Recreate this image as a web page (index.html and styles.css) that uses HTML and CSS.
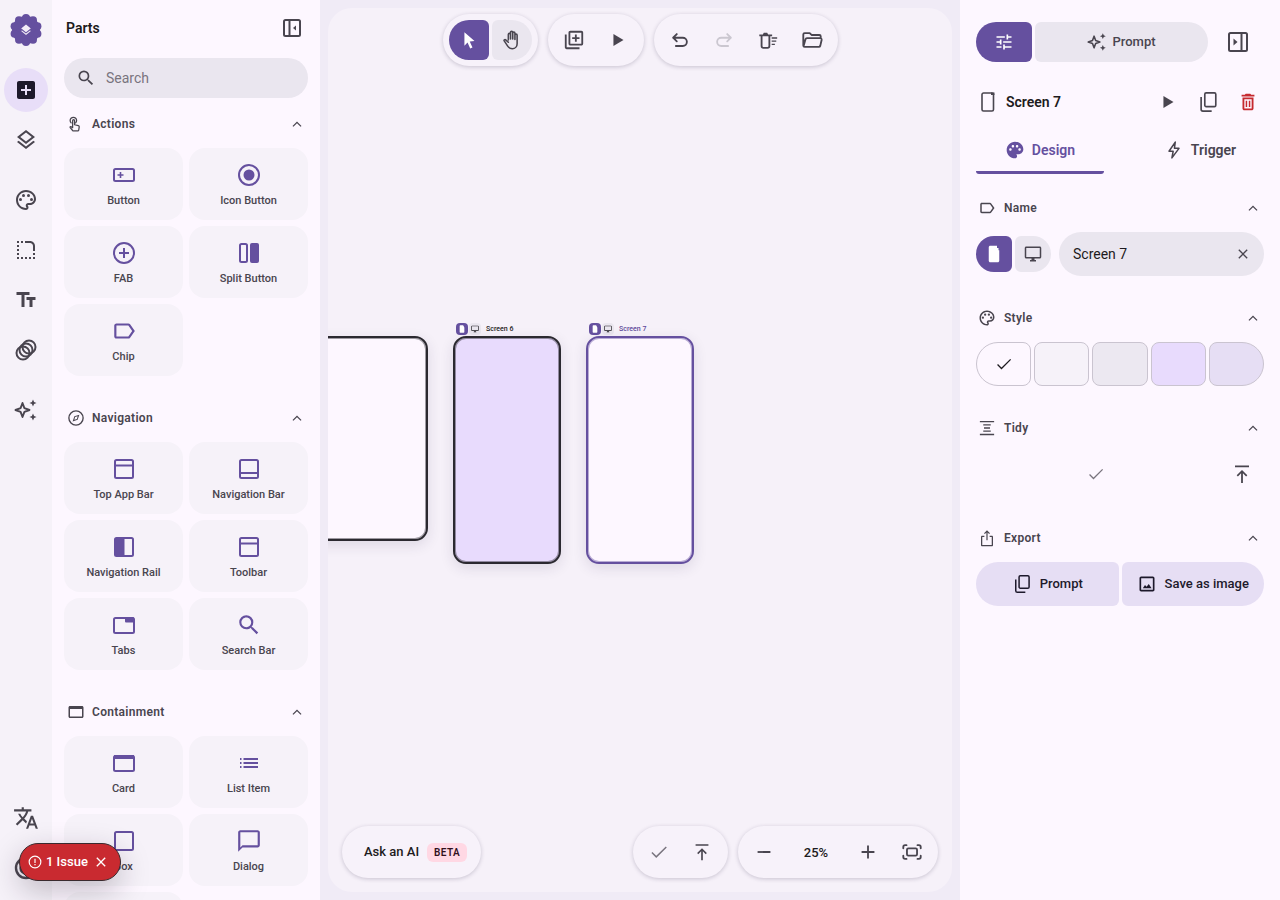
FILE: index.html
```html
<!DOCTYPE html>
<html lang="en">
<head>
    <meta charset="UTF-8">
    <title>Parts</title>
    <link rel="stylesheet" href="styles.css">
</head>
<body>
    <!-- icon sprite -->
    <svg class="sprite" xmlns="http://www.w3.org/2000/svg">
        <symbol id="i-search" viewBox="0 0 24 24"><path d="M15.5 14h-.79l-.28-.27A6.471 6.471 0 0 0 16 9.5 6.5 6.5 0 1 0 9.5 16c1.61 0 3.09-.59 4.23-1.57l.27.28v.79l5 4.99L20.49 19l-4.99-5zm-6 0C7.01 14 5 11.99 5 9.5S7.01 5 9.5 5 14 7.01 14 9.5 11.99 14 9.5 14z"/></symbol>
        <symbol id="i-less" viewBox="0 0 24 24"><path d="M12 8.500l-6 6 1.200 1.200 4.800-4.800 4.800 4.800 1.200-1.200z"/></symbol>
        <symbol id="i-addbox" viewBox="0 0 24 24"><path d="M19 3H5c-1.100 0-2 .9-2 2v14c0 1.100.9 2 2 2h14c1.100 0 2-.9 2-2V5c0-1.100-.9-2-2-2zm-2 10h-4v4h-2v-4H7v-2h4V7h2v4h4v2z"/></symbol>
        <symbol id="i-layers" viewBox="0 0 24 24"><path d="M11.99 18.54l-7.37-5.73L3 14.07l9 7 9-7-1.63-1.27zM12 16l7.36-5.73L21 9l-9-7-9 7 1.63 1.27L12 16zm0-11.47L17.74 9 12 13.47 6.26 9 12 4.53z"/></symbol>
        <symbol id="i-layers-fill" viewBox="0 0 24 24"><path d="M11.99 18.54l-7.37-5.73L3 14.07l9 7 9-7-1.63-1.27zM12 16l7.36-5.73L21 9l-9-7-9 7 1.63 1.27L12 16z"/></symbol>
        <symbol id="i-palette" viewBox="0 0 24 24"><path d="M12 22C6.49 22 2 17.51 2 12S6.49 2 12 2s10 4.04 10 9c0 3.31-2.69 6-6 6h-1.77c-.28 0-.5.22-.5.5 0 .12.05.23.13.33.41.47.64 1.06.64 1.67 0 1.38-1.12 2.5-2.5 2.5zm0-18c-4.41 0-8 3.59-8 8s3.59 8 8 8c.28 0 .5-.22.5-.5 0-.16-.08-.28-.14-.35-.41-.46-.63-1.05-.63-1.65 0-1.38 1.12-2.5 2.5-2.5H16c2.21 0 4-1.79 4-4 0-3.86-3.59-7-8-7z"/><circle cx="6.5" cy="11.5" r="1.5"/><circle cx="9.5" cy="7.5" r="1.5"/><circle cx="14.5" cy="7.5" r="1.5"/><circle cx="17.5" cy="11.5" r="1.5"/></symbol>
        <symbol id="i-palette-fill" viewBox="0 0 24 24"><path d="M12 2C6.49 2 2 6.49 2 12s4.49 10 10 10c1.38 0 2.5-1.12 2.5-2.5 0-.61-.23-1.2-.64-1.67-.08-.1-.13-.21-.13-.33 0-.28.22-.5.5-.5H16c3.31 0 6-2.69 6-6 0-4.96-4.49-9-10-9zm5.5 11c-.83 0-1.5-.67-1.5-1.5s.67-1.5 1.5-1.5 1.5.67 1.5 1.5-.67 1.5-1.5 1.5zm-3-4c-.83 0-1.5-.67-1.5-1.5S13.67 6 14.5 6s1.5.67 1.5 1.5S15.33 9 14.5 9zM5 11.5c0-.83.67-1.5 1.5-1.5s1.5.67 1.5 1.5S7.33 13 6.5 13 5 12.33 5 11.5zm6-4c0 .83-.67 1.5-1.5 1.5S8 8.33 8 7.5 8.67 6 9.5 6s1.5.67 1.5 1.5z"/></symbol>
        <symbol id="i-corner" viewBox="0 0 24 24"><path d="M19 19h2v2h-2v-2zm0-2h2v-2h-2v2zM3 13h2v-2H3v2zm0 4h2v-2H3v2zm0-8h2V7H3v2zm0-4h2V3H3v2zm4 0h2V3H7v2zm8 16h2v-2h-2v2zm-4 0h2v-2h-2v2zm-4 0h2v-2H7v2zm-4 0h2v-2H3v2zM21 8c0-2.76-2.24-5-5-5h-5v2h5c1.65 0 3 1.35 3 3v5h2V8z"/></symbol>
        <symbol id="i-text" viewBox="0 0 24 24"><path d="M2.5 4v3h5v12h3V7h5V4h-13zm19 5h-9v3h3v7h3v-7h3V9z"/></symbol>
        <symbol id="i-rings" viewBox="0 0 24 24"><g fill="none" stroke="currentColor" stroke-width="2"><circle cx="9" cy="15" r="6.5"/><circle cx="12" cy="12" r="6.5"/><circle cx="15" cy="9" r="6.5"/></g></symbol>
        <symbol id="i-spark" viewBox="0 0 24 24"><path d="M8.500 5l1.900 5.100 5.100 1.900-5.100 1.900L8.500 19l-1.900-5.100L1.500 12l5.100-1.900z" fill="none" stroke="currentColor" stroke-width="1.900" stroke-linejoin="round"/><path d="M19 1.500l1.100 2.400 2.400 1.100-2.400 1.100L19 8.500l-1.100-2.400L15.500 5l2.400-1.100zM19 15.500l1.100 2.400 2.400 1.100-2.400 1.100-1.100 2.400-1.100-2.400-2.400-1.100 2.400-1.100z"/></symbol>
        <symbol id="i-translate" viewBox="0 0 24 24"><path d="M12.870 15.070l-2.540-2.510.03-.03c1.740-1.940 2.980-4.170 3.710-6.530H17V4h-7V2H8v2H1v1.990h11.170C11.500 7.920 10.440 9.750 9 11.350 8.070 10.320 7.300 9.190 6.690 8h-2c.73 1.630 1.730 3.170 2.980 4.560l-5.090 5.020L4 19l5-5 3.110 3.110.76-2.040zM18.500 10h-2L12 22h2l1.120-3h4.750L21 22h2l-4.500-12zm-2.620 7l1.620-4.330L19.120 17h-3.240z"/></symbol>
        <symbol id="i-arcs" viewBox="0 0 24 24"><g fill="none" stroke="currentColor" stroke-width="2.400"><circle cx="12" cy="12" r="10"/><circle cx="12" cy="12" r="5.500"/></g></symbol>
        <symbol id="i-panel-left" viewBox="0 0 24 24"><g fill="none" stroke="currentColor" stroke-width="2"><rect x="4" y="4" width="16" height="16" rx="1.500"/><path d="M9.500 4v16"/></g><path d="M16 9.500v5L13 12z"/></symbol>
        <symbol id="i-panel-right" viewBox="0 0 24 24"><g fill="none" stroke="currentColor" stroke-width="2"><rect x="3" y="3" width="18" height="18" rx="1.500"/><path d="M15.500 3v18"/></g><path d="M7.500 8.500v7l4-3.500z"/></symbol>
        <symbol id="i-touch" viewBox="0 0 24 24"><g fill="none" stroke="currentColor" stroke-width="1.700" stroke-linejoin="round" stroke-linecap="round"><path d="M5.500 10.500a4.300 4.300 0 1 1 6 0"/><path d="M7 20l-2.700-3.200c-.6-.8.400-1.800 1.300-1.200l1.900 1.300V7.500a1.300 1.300 0 0 1 2.600 0V13l5 1.100c.8.200 1.300.9 1.200 1.700l-.7 4.500c-.1.600-.6 1-1.200 1H8.100c-.5 0-.8-.5-1.100-1.300z"/></g></symbol>
        <symbol id="i-compass" viewBox="0 0 24 24"><circle cx="12" cy="12" r="9.500" fill="none" stroke="currentColor" stroke-width="1.800"/><path d="M7.500 16.500l2.300-6.700 6.700-2.300-2.300 6.700zM10.800 10.800l-1 3.400 3.400-1 1-3.400z" fill-rule="evenodd"/></symbol>
        <symbol id="i-window" viewBox="0 0 24 24"><path d="M20 4H4c-1.100 0-2 .9-2 2v12c0 1.100.9 2 2 2h16c1.100 0 2-.9 2-2V6c0-1.100-.9-2-2-2zm0 14H4V8h16v10z"/></symbol>
        <symbol id="i-button" viewBox="0 0 24 24"><rect x="2" y="6" width="20" height="12" rx="1.500" fill="none" stroke="currentColor" stroke-width="2"/><path d="M5.500 11.200h2.200V9h1.600v2.200h2.200v1.600H9.300V15H7.700v-2.200H5.500z"/></symbol>
        <symbol id="i-radio" viewBox="0 0 24 24"><circle cx="12" cy="12" r="10" fill="none" stroke="currentColor" stroke-width="2"/><circle cx="12" cy="12" r="5.500"/></symbol>
        <symbol id="i-fab" viewBox="0 0 24 24"><circle cx="12" cy="12" r="10" fill="none" stroke="currentColor" stroke-width="2"/><path d="M7 11h4V7h2v4h4v2h-4v4h-2v-4H7z"/></symbol>
        <symbol id="i-split" viewBox="0 0 24 24"><rect x="3" y="3" width="7" height="18" rx="1.500" fill="none" stroke="currentColor" stroke-width="2"/><rect x="13" y="2" width="9" height="20" rx="2"/></symbol>
        <symbol id="i-chip" viewBox="0 0 24 24"><path d="M17.630 5.840C17.270 5.330 16.670 5 16 5L5 5.010C3.900 5.010 3 5.900 3 7v10c0 1.100.9 1.990 2 1.990L16 19c.67 0 1.270-.33 1.630-.84L22 12l-4.370-6.160zM16 17H5V7h11l3.550 5L16 17z"/></symbol>
        <symbol id="i-topbar" viewBox="0 0 24 24"><g fill="none" stroke="currentColor" stroke-width="2"><rect x="3" y="3" width="18" height="18" rx="1.500"/><path d="M3 8.500h18"/></g></symbol>
        <symbol id="i-navbar" viewBox="0 0 24 24"><g fill="none" stroke="currentColor" stroke-width="2"><rect x="3" y="3" width="18" height="18" rx="1.500"/><path d="M3 16h18"/></g></symbol>
        <symbol id="i-rail" viewBox="0 0 24 24"><rect x="3" y="3" width="18" height="18" rx="1.500" fill="none" stroke="currentColor" stroke-width="2"/><rect x="3" y="3" width="9.500" height="18" rx="1.500"/></symbol>
        <symbol id="i-tabs" viewBox="0 0 24 24"><rect x="2" y="5" width="20" height="15" rx="1.500" fill="none" stroke="currentColor" stroke-width="2"/><rect x="13" y="4" width="9" height="5.500" rx="1"/></symbol>
        <symbol id="i-card" viewBox="0 0 24 24"><rect x="2" y="5" width="20" height="15" rx="1.500" fill="none" stroke="currentColor" stroke-width="2"/><rect x="2" y="4" width="20" height="4"/></symbol>
        <symbol id="i-list" viewBox="0 0 24 24"><path d="M3 13h1.500v-2H3v2zm0 4h1.500v-2H3v2zm0-8h1.500V7H3v2zm3.500 4H21v-2H6.500v2zm0 4H21v-2H6.500v2zm0-10v2H21V7H6.500z"/></symbol>
        <symbol id="i-box" viewBox="0 0 24 24"><rect x="3" y="3" width="18" height="18" rx="1.500" fill="none" stroke="currentColor" stroke-width="2"/></symbol>
        <symbol id="i-dialog" viewBox="0 0 24 24"><path d="M20 2H4c-1.100 0-2 .9-2 2v18l4-4h14c1.100 0 2-.9 2-2V4c0-1.100-.9-2-2-2zm0 14H6l-2 2V4h16v12z"/></symbol>
        <symbol id="i-cursor" viewBox="0 0 24 24"><path d="M7 3.500l11 9.700-5.200.4 3 6.500-2.500 1.100-2.900-6.600L7 18.300z"/></symbol>
        <symbol id="i-hand" viewBox="0 0 24 24"><path d="M8 12V6a1.200 1.200 0 0 1 2.400 0v5M10.400 11V3.700a1.200 1.200 0 0 1 2.400 0V11M12.800 11V4.500a1.200 1.200 0 0 1 2.400 0v7M15.200 11.500V6.700a1.200 1.200 0 0 1 2.400 0V16c0 3.300-2.300 5.500-5.300 5.500-2.400 0-3.800-1-5-2.800L3.500 13c-.6-1 .7-2 1.600-1.200L8 14.500" fill="none" stroke="currentColor" stroke-width="1.700" stroke-linecap="round" stroke-linejoin="round"/></symbol>
        <symbol id="i-libadd" viewBox="0 0 24 24"><path d="M4 6H2v14c0 1.100.9 2 2 2h14v-2H4V6zm16-4H8c-1.100 0-2 .9-2 2v12c0 1.100.9 2 2 2h12c1.100 0 2-.9 2-2V4c0-1.100-.9-2-2-2zm0 14H8V4h12v12zm-7-2h2v-3h3V9h-3V6h-2v3h-3v2h3z"/></symbol>
        <symbol id="i-play" viewBox="0 0 24 24"><path d="M7 5.500v13l11-6.500z"/></symbol>
        <symbol id="i-undo" viewBox="0 0 24 24"><path d="M8.500 5.500L4.500 9.500l4 4M4.500 9.500H15a4.500 4.500 0 0 1 0 9H7.500" fill="none" stroke="currentColor" stroke-width="2" stroke-linecap="round" stroke-linejoin="round"/></symbol>
        <symbol id="i-redo" viewBox="0 0 24 24"><path d="M15.500 5.500l4 4-4 4M19.500 9.500H9a4.500 4.500 0 0 0 0 9h7.500" fill="none" stroke="currentColor" stroke-width="2" stroke-linecap="round" stroke-linejoin="round"/></symbol>
        <symbol id="i-sweep" viewBox="0 0 24 24"><path d="M5 8v10.500c0 1.100.9 2 2 2h4.500c1.100 0 2-.9 2-2V8M2.500 7h14M7 7l1-2h2.500l1 2" fill="none" stroke="currentColor" stroke-width="2"/><path d="M16 9h6v1.500h-6zM16 12.500h5v1.500h-5zM16 16h3.500v1.500H16z"/></symbol>
        <symbol id="i-folder" viewBox="0 0 24 24"><path d="M4 19.500c-1 0-1.500-.7-1.500-1.500V6c0-.9.600-1.500 1.500-1.500h5.500l2 2H20c.9 0 1.500.6 1.500 1.500V10M4 19.500h15.500c.8 0 1.300-.5 1.500-1.100L22.500 12c.2-1.100-.4-2-1.500-2H6.500c-.8 0-1.400.5-1.600 1.200L3 18" fill="none" stroke="currentColor" stroke-width="2" stroke-linejoin="round"/></symbol>
        <symbol id="i-check" viewBox="0 0 24 24"><path d="M9 16.200L4.800 12l-1.100 1.100L9 18.500 20.500 7l-1.100-1.100z"/></symbol>
        <symbol id="i-top" viewBox="0 0 24 24"><path d="M5 3.500h14v1.800H5zM11.100 21v-9.800l-3.200 3.200L6.700 13.200 12 8l5.300 5.200-1.200 1.200-3.200-3.200V21z"/></symbol>
        <symbol id="i-minus" viewBox="0 0 24 24"><path d="M5 11h14v2H5z"/></symbol>
        <symbol id="i-plus" viewBox="0 0 24 24"><path d="M19 13h-6v6h-2v-6H5v-2h6V5h2v6h6v2z"/></symbol>
        <symbol id="i-fit" viewBox="0 0 24 24"><g fill="none" stroke="currentColor" stroke-width="2" stroke-linecap="round"><path d="M2.500 8V6.500c0-1.100.9-2 2-2H6M18 4.500h1.500c1.100 0 2 .9 2 2V8M21.500 16v1.500c0 1.100-.9 2-2 2H18M6 19.500H4.500c-1.100 0-2-.9-2-2V16"/><rect x="6.500" y="8" width="11" height="8" rx="1.500"/></g></symbol>
        <symbol id="i-close" viewBox="0 0 24 24"><path d="M19 6.400L17.600 5 12 10.600 6.400 5 5 6.400 10.600 12 5 17.600 6.400 19 12 13.400 17.600 19 19 17.600 13.400 12z"/></symbol>
        <symbol id="i-error" viewBox="0 0 24 24"><circle cx="12" cy="12" r="10" fill="none" stroke="currentColor" stroke-width="2"/><path d="M11 6.500h2v7h-2zM11 15.500h2v2h-2z"/></symbol>
        <symbol id="i-tune" viewBox="0 0 24 24"><path d="M3 17v2h6v-2H3zM3 5v2h10V5H3zm10 16v-2h8v-2h-8v-2h-2v6h2zM7 9v2H3v2h4v2h2V9H7zm14 4v-2H11v2h10zm-6-4h2V7h4V5h-4V3h-2v6z"/></symbol>
        <symbol id="i-phone" viewBox="0 0 24 24"><path d="M7.500 3h8.500c.8 0 1.500.7 1.500 1.500v15c0 .8-.7 1.500-1.500 1.500H7.500c-.8 0-1.500-.7-1.500-1.500v-15C6 3.700 6.700 3 7.500 3z" fill="none" stroke="currentColor" stroke-width="1.600"/><path d="M15 2.500h3.500v2.500H15z"/></symbol>
        <symbol id="i-phone-fill" viewBox="0 0 24 24"><path d="M7 1h9v3h2v3h-1v0h2v14c0 1.100-.9 2-2 2H7c-1.100 0-2-.9-2-2V3c0-1.100.9-2 2-2z"/></symbol>
        <symbol id="i-copy" viewBox="0 0 24 24"><g fill="none" stroke="currentColor" stroke-width="1.800" stroke-linejoin="round"><rect x="8.500" y="2" width="12" height="15" rx="1.500"/><path d="M4.500 6.500V20c0 1.100.9 2 2 2H16"/></g></symbol>
        <symbol id="i-delete" viewBox="0 0 24 24"><path d="M6 19c0 1.100.9 2 2 2h8c1.100 0 2-.9 2-2V7H6v12zM8 9h8v10H8V9zm7.500-5l-1-1h-5l-1 1H5v2h14V4h-3.500zM9.500 10.500h1.600v7H9.500zM12.900 10.500h1.600v7h-1.600z"/></symbol>
        <symbol id="i-bolt" viewBox="0 0 24 24"><path d="M13.500 2.500L6 13.500h5L9.500 21.500 18 10h-5.500z" fill="none" stroke="currentColor" stroke-width="1.800" stroke-linejoin="round"/></symbol>
        <symbol id="i-desktop" viewBox="0 0 24 24"><path d="M21 2H3c-1.100 0-2 .9-2 2v12c0 1.100.9 2 2 2h7v2H8v2h8v-2h-2v-2h7c1.100 0 2-.9 2-2V4c0-1.100-.9-2-2-2zm0 14H3V4h18v12z"/></symbol>
        <symbol id="i-tidy" viewBox="0 0 24 24"><path d="M2.500 2.500h19v1.800h-19zM2.500 19.700h19v1.800h-19zM7 7h10v1.800H7zM8 11.100h8v1.800H8zM7 15.200h10V17H7z"/></symbol>
        <symbol id="i-share" viewBox="0 0 24 24"><path d="M16 5.500l-1.200 1.200-2-2V15h-1.600V4.700l-2 2L8 5.500l4-4zM8.500 9v1.700H5.700v10.600h12.600V10.700h-2.800V9h3c.9 0 1.500.7 1.500 1.500v11c0 .8-.6 1.500-1.500 1.500h-13C4.700 23 4 22.300 4 21.500v-11C4 9.700 4.700 9 5.500 9z"/></symbol>
        <symbol id="i-image" viewBox="0 0 24 24"><path d="M19 5v14H5V5h14m0-2H5c-1.100 0-2 .9-2 2v14c0 1.100.9 2 2 2h14c1.100 0 2-.9 2-2V5c0-1.100-.9-2-2-2zm-4.900 8.900l-2.600 3.400-1.900-2.200L7 17h10.500z"/></symbol>
    </svg>

    <div class="app">
        <nav class="rail">
            <svg class="logo" viewBox="0 0 32 32">
                <g class="logo-shape">
                    <circle cx="16" cy="16" r="14"/>
                    <circle cx="16" cy="4" r="4"/><circle cx="23" cy="6.300" r="4"/><circle cx="27.400" cy="12.300" r="4"/><circle cx="27.400" cy="19.700" r="4"/><circle cx="23" cy="25.700" r="4"/>
                    <circle cx="16" cy="28" r="4"/><circle cx="9" cy="25.700" r="4"/><circle cx="4.600" cy="19.700" r="4"/><circle cx="4.600" cy="12.300" r="4"/><circle cx="9" cy="6.300" r="4"/>
                </g>
                <use href="#i-layers-fill" x="9.500" y="9.500" width="13" height="13" class="logo-mark"/>
            </svg>
            <button class="rail-btn rail-active"><svg class="ic"><use href="#i-addbox"/></svg></button>
            <button class="rail-btn"><svg class="ic"><use href="#i-layers"/></svg></button>
            <button class="rail-btn rail-gap"><svg class="ic"><use href="#i-palette"/></svg></button>
            <button class="rail-btn"><svg class="ic"><use href="#i-corner"/></svg></button>
            <button class="rail-btn"><svg class="ic"><use href="#i-text"/></svg></button>
            <button class="rail-btn"><svg class="ic"><use href="#i-rings"/></svg></button>
            <button class="rail-btn rail-gap"><svg class="ic"><use href="#i-spark"/></svg></button>
            <button class="rail-btn rail-bottom"><svg class="ic ic-26"><use href="#i-translate"/></svg></button>
            <button class="rail-btn"><svg class="ic"><use href="#i-arcs"/></svg></button>
        </nav>

        <aside class="parts">
            <div class="parts-head">
                <h2>Parts</h2>
                <svg class="ic"><use href="#i-panel-left"/></svg>
            </div>
            <div class="search">
                <svg class="ic ic-20"><use href="#i-search"/></svg>
                <span>Search</span>
            </div>

            <section class="group">
                <div class="sec-head">
                    <svg class="ic ic-18"><use href="#i-touch"/></svg>
                    <span>Actions</span>
                    <svg class="ic ic-18 sec-arrow"><use href="#i-less"/></svg>
                </div>
                <div class="cards">
                    <div class="card"><svg class="ic"><use href="#i-button"/></svg><span>Button</span></div>
                    <div class="card"><svg class="ic"><use href="#i-radio"/></svg><span>Icon Button</span></div>
                    <div class="card"><svg class="ic"><use href="#i-fab"/></svg><span>FAB</span></div>
                    <div class="card"><svg class="ic"><use href="#i-split"/></svg><span>Split Button</span></div>
                    <div class="card"><svg class="ic ic-26"><use href="#i-chip"/></svg><span>Chip</span></div>
                </div>
            </section>

            <section class="group">
                <div class="sec-head">
                    <svg class="ic ic-18"><use href="#i-compass"/></svg>
                    <span>Navigation</span>
                    <svg class="ic ic-18 sec-arrow"><use href="#i-less"/></svg>
                </div>
                <div class="cards">
                    <div class="card"><svg class="ic"><use href="#i-topbar"/></svg><span>Top App Bar</span></div>
                    <div class="card"><svg class="ic"><use href="#i-navbar"/></svg><span>Navigation Bar</span></div>
                    <div class="card"><svg class="ic"><use href="#i-rail"/></svg><span>Navigation Rail</span></div>
                    <div class="card"><svg class="ic"><use href="#i-topbar"/></svg><span>Toolbar</span></div>
                    <div class="card"><svg class="ic"><use href="#i-tabs"/></svg><span>Tabs</span></div>
                    <div class="card"><svg class="ic ic-26"><use href="#i-search"/></svg><span>Search Bar</span></div>
                </div>
            </section>

            <section class="group">
                <div class="sec-head">
                    <svg class="ic ic-18"><use href="#i-window"/></svg>
                    <span>Containment</span>
                    <svg class="ic ic-18 sec-arrow"><use href="#i-less"/></svg>
                </div>
                <div class="cards">
                    <div class="card"><svg class="ic"><use href="#i-card"/></svg><span>Card</span></div>
                    <div class="card"><svg class="ic"><use href="#i-list"/></svg><span>List Item</span></div>
                    <div class="card"><svg class="ic"><use href="#i-box"/></svg><span>Box</span></div>
                    <div class="card"><svg class="ic ic-26"><use href="#i-dialog"/></svg><span>Dialog</span></div>
                    <div class="card"></div>
                </div>
            </section>
        </aside>

        <main class="stage">
            <div class="canvas">
                <!-- frames sit on a free canvas -->
                <div class="frame frame-a"></div>

                <div class="frame-tag tag-6">
                    <span class="tag-btn tag-on"><svg class="ic ic-8"><use href="#i-phone-fill"/></svg></span>
                    <span class="tag-btn"><svg class="ic ic-8"><use href="#i-desktop"/></svg></span>
                    <span class="tag-name">Screen 6</span>
                </div>
                <div class="frame frame-b"></div>

                <div class="frame-tag tag-7">
                    <span class="tag-btn tag-on"><svg class="ic ic-8"><use href="#i-phone-fill"/></svg></span>
                    <span class="tag-btn"><svg class="ic ic-8"><use href="#i-desktop"/></svg></span>
                    <span class="tag-name tag-name-on">Screen 7</span>
                </div>
                <div class="frame frame-c"></div>

                <div class="toolbar">
                    <div class="pill pill-tight">
                        <button class="tb tb-on"><svg class="ic"><use href="#i-cursor"/></svg></button>
                        <button class="tb tb-off"><svg class="ic"><use href="#i-hand"/></svg></button>
                    </div>
                    <div class="pill">
                        <button class="tb"><svg class="ic"><use href="#i-libadd"/></svg></button>
                        <button class="tb"><svg class="ic"><use href="#i-play"/></svg></button>
                    </div>
                    <div class="pill">
                        <button class="tb"><svg class="ic"><use href="#i-undo"/></svg></button>
                        <button class="tb tb-dim"><svg class="ic"><use href="#i-redo"/></svg></button>
                        <button class="tb"><svg class="ic"><use href="#i-sweep"/></svg></button>
                        <button class="tb"><svg class="ic"><use href="#i-folder"/></svg></button>
                    </div>
                </div>

                <div class="bottombar">
                    <div class="pill ask">
                        <span class="ask-text">Ask an AI</span>
                        <span class="beta">BETA</span>
                    </div>
                    <div class="bottom-right">
                        <div class="pill pill-tight">
                            <button class="tb tb-grey"><svg class="ic"><use href="#i-check"/></svg></button>
                            <button class="tb"><svg class="ic"><use href="#i-top"/></svg></button>
                        </div>
                        <div class="pill pill-zoom">
                            <button class="tb"><svg class="ic"><use href="#i-minus"/></svg></button>
                            <span class="zoom-val">25%</span>
                            <button class="tb"><svg class="ic"><use href="#i-plus"/></svg></button>
                            <button class="tb tb-fit"><svg class="ic"><use href="#i-fit"/></svg></button>
                        </div>
                    </div>
                </div>
            </div>
        </main>

        <aside class="props">
            <div class="props-top">
                <button class="seg-left"><svg class="ic ic-20"><use href="#i-tune"/></svg></button>
                <button class="seg-right"><svg class="ic ic-20"><use href="#i-spark"/></svg>Prompt</button>
                <button class="tb props-toggle"><svg class="ic"><use href="#i-panel-right"/></svg></button>
            </div>

            <div class="screen-row">
                <svg class="ic"><use href="#i-phone"/></svg>
                <strong>Screen 7</strong>
                <div class="screen-actions">
                    <svg class="ic ic-22"><use href="#i-play"/></svg>
                    <svg class="ic ic-22"><use href="#i-copy"/></svg>
                    <svg class="ic ic-22 red"><use href="#i-delete"/></svg>
                </div>
            </div>

            <div class="tabs">
                <div class="tab tab-on"><svg class="ic ic-20"><use href="#i-palette-fill"/></svg>Design</div>
                <div class="tab"><svg class="ic ic-20"><use href="#i-bolt"/></svg>Trigger</div>
            </div>

            <section class="prop">
                <div class="sec-head prop-head">
                    <svg class="ic ic-18"><use href="#i-chip"/></svg>
                    <span>Name</span>
                    <svg class="ic ic-18 sec-arrow"><use href="#i-less"/></svg>
                </div>
                <div class="name-row">
                    <button class="dev dev-on"><svg class="ic ic-18"><use href="#i-phone-fill"/></svg></button>
                    <button class="dev"><svg class="ic ic-18"><use href="#i-desktop"/></svg></button>
                    <div class="name-input">
                        <span>Screen 7</span>
                        <svg class="ic ic-16"><use href="#i-close"/></svg>
                    </div>
                </div>
            </section>

            <section class="prop">
                <div class="sec-head prop-head">
                    <svg class="ic ic-18"><use href="#i-palette"/></svg>
                    <span>Style</span>
                    <svg class="ic ic-18 sec-arrow"><use href="#i-less"/></svg>
                </div>
                <div class="swatches">
                    <div class="swatch sw-1"><svg class="ic ic-20"><use href="#i-check"/></svg></div>
                    <div class="swatch sw-2"></div>
                    <div class="swatch sw-3"></div>
                    <div class="swatch sw-4"></div>
                    <div class="swatch sw-5"></div>
                </div>
            </section>

            <section class="prop">
                <div class="sec-head prop-head">
                    <svg class="ic ic-18"><use href="#i-tidy"/></svg>
                    <span>Tidy</span>
                    <svg class="ic ic-18 sec-arrow"><use href="#i-less"/></svg>
                </div>
                <div class="tidy-row">
                    <div class="tidy-main tb-grey"><svg class="ic ic-20"><use href="#i-check"/></svg></div>
                    <div class="tidy-side"><svg class="ic"><use href="#i-top"/></svg></div>
                </div>
            </section>

            <section class="prop">
                <div class="sec-head prop-head">
                    <svg class="ic ic-18"><use href="#i-share"/></svg>
                    <span>Export</span>
                    <svg class="ic ic-18 sec-arrow"><use href="#i-less"/></svg>
                </div>
                <div class="export-row">
                    <button class="exp exp-left"><svg class="ic ic-20"><use href="#i-copy"/></svg>Prompt</button>
                    <button class="exp exp-right"><svg class="ic ic-20"><use href="#i-image"/></svg>Save as image</button>
                </div>
            </section>
        </aside>

        <div class="issue">
            <svg class="ic ic-14"><use href="#i-error"/></svg>
            <span class="issue-text">1 Issue</span>
            <svg class="ic ic-16 issue-x"><use href="#i-close"/></svg>
        </div>
    </div>
</body>
</html>
```

FILE: styles.css
```css
* {
  box-sizing: border-box;
}
html, body {
  margin: 0;
  height: 100%;
  overflow: hidden;
}
body {
  font-family: Roboto, "Liberation Sans", sans-serif;
  color: #1d1b20;
  background-color: #f0ebf6;
}
button {
  border: 0;
  padding: 0;
  background: none;
  color: inherit;
  font: inherit;
  display: flex;
  align-items: center;
  justify-content: center;
}
.sprite {
  display: none;
}
.ic {
  width: 24px;
  height: 24px;
  fill: currentColor;
  flex: none;
  display: block;
}
.ic-26 { width: 26px; height: 26px; }
.ic-22 { width: 22px; height: 22px; }
.ic-20 { width: 20px; height: 20px; }
.ic-18 { width: 18px; height: 18px; }
.ic-16 { width: 16px; height: 16px; }
.ic-14 { width: 14px; height: 14px; }
.ic-8 { width: 8px; height: 8px; }
.red { color: #c62a2f; }

.app {
  display: flex;
  height: 900px;
  position: relative;
}

/* left rail */
.rail {
  width: 52px;
  flex: none;
  padding: 14px 4px 10px;
  background-color: #f6f2f9;
  display: flex;
  flex-direction: column;
  align-items: center;
  gap: 6px;
  color: #49454f;
}
.logo {
  width: 32px;
  height: 32px;
  flex: none;
  margin-bottom: 16px;
}
.logo-shape {
  fill: #65509f;
}
.logo-mark {
  fill: #f3edf7;
}
.rail-btn {
  width: 44px;
  height: 44px;
  flex: none;
  border-radius: 50%;
}
.rail-active {
  background-color: #e8def8;
  color: #1d192b;
}
.rail-gap {
  margin-top: 10px;
}
.rail-bottom {
  margin-top: auto;
}

/* parts panel */
.parts {
  width: 268px;
  flex: none;
  padding: 0 12px;
  background-color: #fdf7ff;
  overflow: hidden;
}
.parts-head {
  height: 56px;
  padding: 0 4px 0 2px;
  display: flex;
  align-items: center;
  justify-content: space-between;
  color: #49454f;
}
.parts-head h2 {
  margin: 0;
  font-size: 14px;
  font-weight: 600;
  color: #1d1b20;
}
.search {
  height: 40px;
  margin: 2px 0 14px;
  padding: 0 12px;
  border-radius: 20px;
  background-color: #eae6ef;
  color: #49454f;
  display: flex;
  align-items: center;
  gap: 10px;
  font-size: 14px;
}
.search span {
  color: #79747e;
}
.group {
  margin-bottom: 30px;
}
.sec-head {
  height: 24px;
  margin-bottom: 12px;
  padding: 0 2px 0 3px;
  display: flex;
  align-items: center;
  gap: 7px;
  color: #49454f;
  font-size: 12px;
  font-weight: 600;
  letter-spacing: 0.3px;
}
.sec-arrow {
  margin-left: auto;
}
.cards {
  display: grid;
  grid-template-columns: 119px 119px;
  grid-auto-rows: 72px;
  gap: 6px;
}
.card {
  padding-top: 15px;
  border-radius: 16px;
  background-color: #f6f2f9;
  color: #65509f;
  display: flex;
  flex-direction: column;
  align-items: center;
}
.card .ic-26 {
  margin: -1px 0;
}
.card span {
  margin-top: 6px;
  color: #49454f;
  font-size: 11px;
  line-height: 16px;
  font-weight: 500;
}

/* centre */
.stage {
  flex: 1;
  padding: 8px;
  background-color: #f0ebf6;
}
.canvas {
  height: 100%;
  position: relative;
  overflow: hidden;
  border-radius: 24px;
  background-color: #f6f1f9;
}
.frame {
  position: absolute;
  border: 2px solid #2b2930;
  border-radius: 13px;
  background-color: #fdf7ff;
  box-shadow: 0 4px 14px rgba(40, 30, 70, 0.12), inset 0 0 0 1px rgba(43, 41, 48, 0.45);
}
.frame-a { left: -40px; top: 328px; width: 140px; height: 205px; }
.frame-b { left: 125px; top: 328px; width: 108px; height: 228px; background-color: #e8dbfd; }
.frame-c {
  left: 258px;
  top: 328px;
  width: 108px;
  height: 228px;
  border-color: #65509f;
  box-shadow: 0 4px 14px rgba(40, 30, 70, 0.12), inset 0 0 0 1px rgba(101, 80, 159, 0.45);
}
.frame-tag {
  position: absolute;
  top: 315px;
  height: 12px;
  display: flex;
  align-items: center;
  gap: 1px;
}
.tag-6 { left: 128px; }
.tag-7 { left: 261px; }
.tag-btn {
  width: 12px;
  height: 12px;
  border-radius: 4px;
  background-color: #eae6ef;
  color: #1d1b20;
  display: flex;
  align-items: center;
  justify-content: center;
}
.tag-on {
  background-color: #65509f;
  color: #fff;
}
.tag-name {
  margin-left: 4px;
  font-size: 7px;
  font-weight: 500;
  color: #1d1b20;
}
.tag-name-on {
  color: #5f4a9a;
}

.toolbar {
  position: absolute;
  top: 6px;
  left: 0;
  right: 0;
  display: flex;
  justify-content: center;
  gap: 10px;
}
.bottombar {
  position: absolute;
  left: 14px;
  right: 14px;
  bottom: 14px;
  display: flex;
  justify-content: space-between;
}
.bottom-right {
  display: flex;
  gap: 10px;
}
.pill {
  height: 52px;
  padding: 6px;
  border-radius: 26px;
  background-color: #f7f2fa;
  box-shadow: 0 1px 4px rgba(40, 30, 70, 0.22);
  display: flex;
  align-items: center;
  gap: 4px;
  color: #49454f;
}
.pill-tight {
  gap: 3px;
}
.pill-zoom {
  gap: 0;
}
.tb {
  width: 40px;
  height: 40px;
  flex: none;
}
.tb .ic {
  width: 22px;
  height: 22px;
}
.tb-on {
  background-color: #65509f;
  color: #fff;
  border-radius: 20px 6px 6px 20px;
}
.tb-off {
  background-color: #eae6ef;
  border-radius: 6px 20px 20px 6px;
}
.tb-dim {
  color: #cbc7d0;
}
.tb-grey {
  color: #79747e;
}
.tb-fit {
  margin-left: 4px;
}
.zoom-val {
  width: 64px;
  text-align: center;
  font-size: 13px;
  font-weight: 500;
  color: #1d1b20;
}
.ask {
  padding: 0 14px 0 22px;
  gap: 8px;
  font-size: 13px;
  font-weight: 500;
  color: #1d1b20;
}
.ask-text {
  margin-bottom: 2px;
}
.beta {
  height: 19px;
  padding: 0 7px;
  border-radius: 6px;
  background-color: #ffd8e4;
  color: #31111d;
  font-size: 10px;
  font-weight: 600;
  letter-spacing: 0.4px;
  line-height: 19px;
}

/* right panel */
.props {
  width: 320px;
  flex: none;
  padding: 22px 16px 0;
  background-color: #fdf7ff;
}
.props-top {
  display: flex;
  align-items: center;
  gap: 3px;
}
.seg-left {
  width: 56px;
  height: 40px;
  border-radius: 20px 6px 6px 20px;
  background-color: #65509f;
  color: #fff;
}
.seg-right {
  width: 173px;
  height: 40px;
  padding-bottom: 1px;
  border-radius: 6px 20px 20px 6px;
  background-color: #eae6ef;
  color: #49454f;
  font-size: 13px;
  font-weight: 500;
  gap: 5px;
}
.props-toggle {
  margin-left: auto;
  margin-right: 6px;
  color: #49454f;
}
.props-toggle .ic {
  width: 24px;
  height: 24px;
}
.screen-row {
  height: 40px;
  margin-top: 20px;
  display: flex;
  align-items: center;
  gap: 6px;
  color: #49454f;
}
.screen-row strong {
  font-size: 14px;
  font-weight: 600;
  color: #1d1b20;
}
.screen-actions {
  margin-left: auto;
  margin-right: 5px;
  display: flex;
  gap: 18px;
}
.tabs {
  height: 52px;
  display: flex;
}
.tab {
  width: 128px;
  padding-top: 7px;
  display: flex;
  align-items: center;
  justify-content: center;
  gap: 7px;
  font-size: 14px;
  font-weight: 600;
  color: #49454f;
}
.tab:last-child {
  flex: 1;
  padding-left: 32px;
  padding-bottom: 3px;
}
.tab-on {
  color: #65509f;
  border-bottom: 3px solid #65509f;
  border-radius: 0 0 3px 3px;
}
.prop {
  margin-bottom: 30px;
}
.prop:first-of-type {
  margin-top: 22px;
}
.prop-head {
  gap: 8px;
  padding: 0 2px 0 2px;
}
.name-row {
  height: 44px;
  display: flex;
  align-items: center;
  gap: 3px;
}
.dev {
  width: 36px;
  height: 36px;
  background-color: #eae6ef;
  color: #49454f;
  border-radius: 6px 18px 18px 6px;
}
.dev-on {
  background-color: #65509f;
  color: #fff;
  border-radius: 18px 6px 6px 18px;
}
.name-input {
  flex: 1;
  height: 44px;
  margin-left: 5px;
  padding: 0 13px 0 14px;
  border-radius: 22px;
  background-color: #eae6ef;
  color: #49454f;
  display: flex;
  align-items: center;
  justify-content: space-between;
  font-size: 14px;
}
.name-input span {
  color: #1d1b20;
}
.swatches {
  height: 44px;
  display: flex;
  gap: 3px;
}
.swatch {
  flex: 1;
  border: 1px solid #cac4d0;
  border-radius: 8px;
  display: flex;
  align-items: center;
  justify-content: center;
}
.sw-1 { background-color: #fdf7ff; border-radius: 22px 8px 8px 22px; }
.sw-2 { background-color: #f6f2f9; }
.sw-3 { background-color: #ece8f1; }
.sw-4 { background-color: #e8dbfd; }
.sw-5 { background-color: #e6def4; border-radius: 8px 22px 22px 8px; }
.tidy-row {
  height: 44px;
  display: flex;
  align-items: center;
  color: #49454f;
}
.tidy-main {
  flex: 1;
  display: flex;
  justify-content: center;
}
.tidy-side {
  width: 44px;
  margin-left: 4px;
  display: flex;
  justify-content: center;
}
.export-row {
  height: 44px;
  display: flex;
  gap: 3px;
}
.exp {
  flex: 1;
  gap: 8px;
  padding-bottom: 1px;
  background-color: #e6def4;
  color: #1d192b;
  font-size: 13px;
  font-weight: 500;
}
.exp-left { border-radius: 22px 6px 6px 22px; }
.exp-right { border-radius: 6px 22px 22px 6px; }

/* issue toast */
.issue {
  position: absolute;
  left: 19px;
  top: 843px;
  width: 102px;
  height: 38px;
  padding: 0 11px 0 8px;
  border: 1px solid #3a2a2e;
  border-radius: 19px;
  background-color: #c92a30;
  color: #fff;
  box-shadow: 0 10px 30px rgba(30, 20, 40, 0.25);
  display: flex;
  align-items: center;
  gap: 4px;
  font-size: 13px;
  font-weight: 500;
}
.issue-text {
  margin-bottom: 1px;
  white-space: nowrap;
}
.issue-x {
  margin-left: auto;
}
```
